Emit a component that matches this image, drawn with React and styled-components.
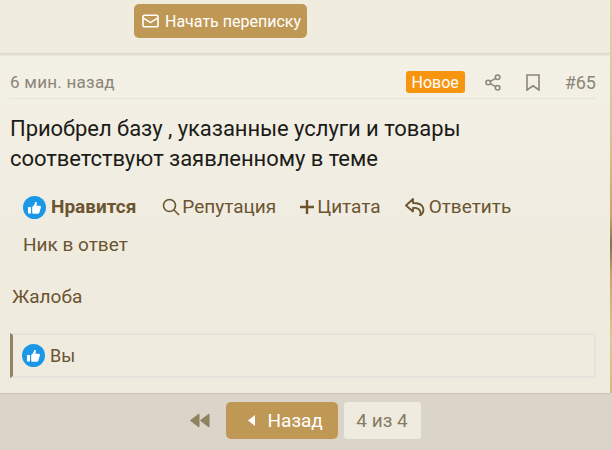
import React from 'react';
import styled, { createGlobalStyle } from 'styled-components';

const GlobalStyle = createGlobalStyle`
  html, body {
    margin: 0;
    padding: 0;
    height: 450px;
    overflow: hidden;
    background: #d9d2c5;
    font-family: Roboto, "Liberation Sans", sans-serif;
  }
`;

const Page = styled.div`
  width: 612px;
  height: 450px;
  display: flex;
  flex-direction: column;
  overflow: hidden;
  background:
    linear-gradient(#ded2b0 0, #d8c28a 150px, #c9a860 215px, #7f7350 245px, #c9a860 275px, #dcc995 340px, #d6bd80 393px, #dbd4c8 393px) right / 2px 100% no-repeat,
    linear-gradient(#ebe5d7, #ebe5d7) top / 100% 393px no-repeat,
    #dbd4c8;
`;

const TopCard = styled.section`
  height: 53px;
  margin-right: 2px;
  padding: 4px 0 0 134px;
  box-sizing: border-box;
  background: #f0ecdf;
  box-shadow: 0 1px 1px rgba(150, 130, 90, 0.12);
`;

const StartButton = styled.button`
  height: 34px;
  padding: 0 6px 0 8px;
  display: flex;
  align-items: center;
  gap: 6px;
  border: 0;
  border-radius: 5px;
  background: #bf9855;
  color: #fff;
  font: 400 16px Roboto, sans-serif;
`;

const Post = styled.article`
  height: 337px;
  margin: 3px 2px 0 0;
  padding: 0 14px 0 10px;
  box-sizing: border-box;
  background: linear-gradient(#f3f0e6, #efebdf 60%);
  box-shadow: 0 1px 1px rgba(130, 115, 85, 0.15);
  display: flex;
  flex-direction: column;
`;

const PostHeader = styled.header`
  height: 43px;
  padding-top: 12px;
  padding-bottom: 2px;
  display: flex;
  align-items: center;
  box-sizing: border-box;
  border-bottom: 1px solid #e4e3dc;
  color: #8a8678;
  font-size: 17px;
`;

const Time = styled.span`
  flex: 1;
  letter-spacing: 0.25px;
`;

const NewBadge = styled.span`
  width: 59px;
  height: 22px;
  display: flex;
  align-items: center;
  justify-content: center;
  border-radius: 3px;
  background: #f7950f;
  color: #fff;
  font-size: 16px;
`;

const HeaderIcon = styled.span`
  display: flex;
  margin-left: ${p => p.$gap}px;
  color: #8a8678;
`;

const PostNumber = styled.span`
  margin-left: 25px;
  font-size: 18px;
`;

const Message = styled.p`
  margin: 15px 0 0;
  color: #1c1b17;
  font-size: 22px;
  line-height: 30px;
  letter-spacing: -0.05px;
`;

const Actions = styled.div`
  margin-top: 20px;
  padding-left: 13px;
  display: flex;
  flex-wrap: wrap;
  row-gap: 12px;
  color: #6b5430;
  font-size: 19px;
  line-height: 26px;
`;

const Action = styled.a`
  display: inline-flex;
  align-items: center;
  margin-right: ${p => p.$gap || 0}px;
  gap: ${p => p.$iconGap ?? 2}px;
  font-weight: ${p => (p.$bold ? 700 : 400)};
`;

const Report = styled.div`
  margin: 26px 0 0 2px;
  color: #6b5430;
  font-size: 19px;
  line-height: 26px;
`;

const LikesBox = styled.div`
  height: 45px;
  margin-top: 23px;
  box-sizing: border-box;
  border: 2px solid #e4e3dc;
  border-left: 3px solid #948660;
  padding-left: 9px;
  display: flex;
  align-items: center;
  gap: 5px;
  color: #6b5430;
  font-size: 18px;
`;

const Footer = styled.footer`
  flex: 1;
  padding-top: 9px;
  display: flex;
  align-items: flex-start;
  justify-content: center;
  box-sizing: border-box;
`;

const FooterInner = styled.div`
  display: flex;
  align-items: center;
  margin-left: -3px;
`;

const Rewind = styled.span`
  display: flex;
  margin-right: 16px;
  color: #8f8260;
`;

const BackButton = styled.button`
  width: 112px;
  height: 37px;
  padding: 0 0 0 22px;
  display: flex;
  align-items: center;
  gap: 13px;
  border: 0;
  border-radius: 5px;
  background: #bf9855;
  color: #fff;
  font: 400 19px Roboto, sans-serif;
`;

const PageLabel = styled.span`
  width: 77px;
  height: 37px;
  margin-left: 6px;
  display: flex;
  align-items: center;
  justify-content: center;
  border-radius: 3px;
  background: #efebdf;
  color: #857a5f;
  font-size: 19px;
`;

const ThumbBadge = ({ size = 23 }) => (
  <svg width={size} height={size} viewBox="0 0 24 24" aria-hidden="true">
    <circle cx="12" cy="12" r="12" fill="#1b97e8" />
    <rect x="5.2" y="11.5" width="3.2" height="6.8" rx="0.6" fill="#fff" />
    <path
      d="M9.6 11.6c1.5-1.3 2.7-3 3-5 .1-.7 1.9-.6 1.9 1.1 0 1-.3 1.9-.7 2.6h3.5c1.3 0 1.7 1 1.3 1.9l-1.6 5.3c-.2.7-.7 1-1.4 1H11c-.6 0-1-.3-1.4-.5z"
      fill="#fff"
    />
  </svg>
);

const Envelope = () => (
  <svg width="17" height="14" viewBox="0 0 17 14" fill="none" stroke="#fff" strokeWidth="1.6" aria-hidden="true">
    <rect x="1" y="1.2" width="15" height="11.6" rx="1.4" />
    <path d="M1.2 3.8 8.5 8.6l7.3-4.8" />
  </svg>
);

const ShareIcon = () => (
  <svg width="16" height="17" viewBox="0 0 16 17" fill="none" stroke="currentColor" strokeWidth="1.5" aria-hidden="true">
    <circle cx="3.2" cy="8.5" r="2.3" />
    <circle cx="12.6" cy="3.2" r="2.3" />
    <circle cx="12.6" cy="13.8" r="2.3" />
    <path d="M5.3 7.4 10.6 4.3M5.3 9.6l5.3 3.1" />
  </svg>
);

const BookmarkIcon = () => (
  <svg width="14" height="17" viewBox="0 0 14 17" fill="none" stroke="currentColor" strokeWidth="1.6" aria-hidden="true">
    <path d="M1 1h12v15l-6-4.2L1 16z" />
  </svg>
);

const SearchIcon = () => (
  <svg width="18" height="18" viewBox="0 0 18 18" fill="none" stroke="currentColor" strokeWidth="1.6" aria-hidden="true">
    <circle cx="7.5" cy="7.5" r="6" />
    <path d="m12 12 5 5" />
  </svg>
);

const PlusIcon = () => (
  <svg width="14" height="14" viewBox="0 0 14 14" fill="none" stroke="currentColor" strokeWidth="2.4" aria-hidden="true">
    <path d="M7 0v14M0 7h14" />
  </svg>
);

const ReplyIcon = () => (
  <svg width="20" height="18" viewBox="0 0 20 18" fill="none" stroke="currentColor" strokeWidth="1.8" strokeLinejoin="round" aria-hidden="true">
    <path d="M8 1 1 7.5 8 13.5V10c3.5-.4 6 .6 7 3 1 2 .6 3.5 0 4.5 3-2 4-5 3-8-1-3-5-4.5-10-4.5z" />
  </svg>
);

const RewindIcon = () => (
  <svg width="21" height="15" viewBox="0 0 21 15" fill="currentColor" stroke="currentColor" strokeWidth="1" strokeLinejoin="round" aria-hidden="true">
    <path d="M10 1v13L1.5 7.5zM20 1v13l-8.5-6.5z" />
  </svg>
);

const LeftArrow = () => (
  <svg width="7" height="11" viewBox="0 0 7 11" fill="#fff" aria-hidden="true">
    <path d="M7 0v11L0 5.5z" />
  </svg>
);

export default function App() {
  return (
    <Page>
      <GlobalStyle />
      <TopCard>
        <StartButton>
          <Envelope />
          Начать переписку
        </StartButton>
      </TopCard>
      <Post>
        <PostHeader>
          <Time>6 мин. назад</Time>
          <NewBadge>Новое</NewBadge>
          <HeaderIcon $gap={20}><ShareIcon /></HeaderIcon>
          <HeaderIcon $gap={25}><BookmarkIcon /></HeaderIcon>
          <PostNumber>#65</PostNumber>
        </PostHeader>
        <Message>
          Приобрел базу , указанные услуги и товары
          <br />
          соответствуют заявленному в теме
        </Message>
        <Actions>
          <Action $bold $gap={26} $iconGap={5}><ThumbBadge />Нравится</Action>
          <Action $gap={24}><SearchIcon />Репутация</Action>
          <Action $gap={24} $iconGap={3}><PlusIcon />Цитата</Action>
          <Action $gap={60} $iconGap={4}><ReplyIcon />Ответить</Action>
          <Action>Ник в ответ</Action>
        </Actions>
        <Report>Жалоба</Report>
        <LikesBox><ThumbBadge />Вы</LikesBox>
      </Post>
      <Footer>
        <FooterInner>
          <Rewind><RewindIcon /></Rewind>
          <BackButton><LeftArrow />Назад</BackButton>
          <PageLabel>4 из 4</PageLabel>
        </FooterInner>
      </Footer>
    </Page>
  );
}
